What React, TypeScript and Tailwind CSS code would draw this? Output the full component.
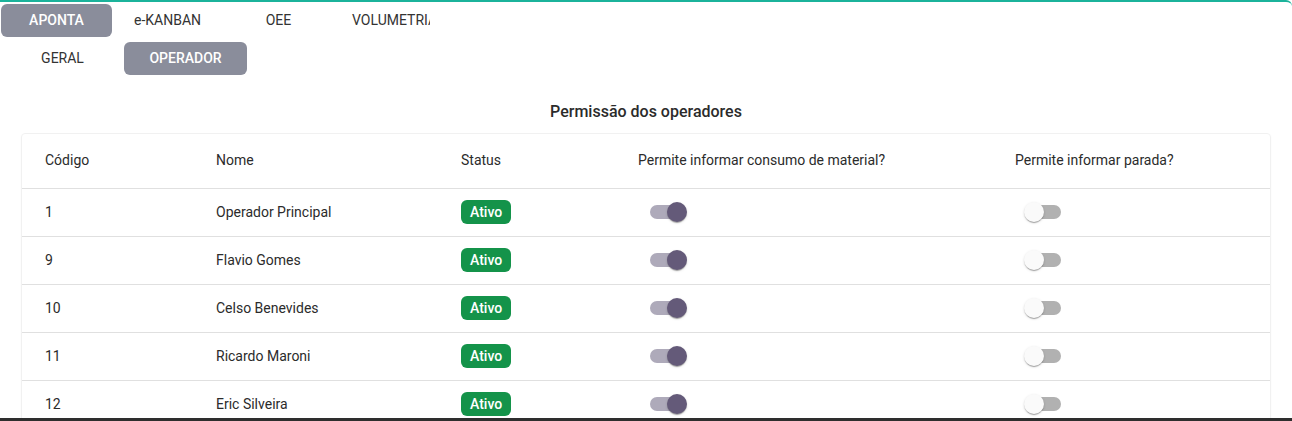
const mainTabs = ["APONTA", "e-KANBAN", "OEE", "VOLUMETRIA"];
const subTabs = ["GERAL", "OPERADOR"];

const operadores = [
  { codigo: 1, nome: "Operador Principal", consumo: true, parada: false },
  { codigo: 9, nome: "Flavio Gomes", consumo: true, parada: false },
  { codigo: 10, nome: "Celso Benevides", consumo: true, parada: false },
  { codigo: 11, nome: "Ricardo Maroni", consumo: true, parada: false },
  { codigo: 12, nome: "Eric Silveira", consumo: true, parada: false },
  { codigo: 14, nome: "Joao Souza", consumo: true, parada: false },
];

function Switch({ on }: { on: boolean }) {
  return (
    <div className="relative w-[58px] h-[38px] shrink-0">
      <div
        className={
          "absolute left-[12px] top-[12px] w-[34px] h-[14px] rounded-full " +
          (on ? "bg-[#aeaaba]" : "bg-[#b1b1b1]")
        }
      />
      <div
        className={
          "absolute top-[9px] w-[20px] h-[20px] rounded-full shadow-[0_2px_1px_-1px_rgba(0,0,0,0.2),0_1px_1px_0_rgba(0,0,0,0.14),0_1px_3px_0_rgba(0,0,0,0.12)] " +
          (on ? "left-[29px] bg-[#645a79]" : "left-[9px] bg-[#fafafa]")
        }
      />
    </div>
  );
}

export default function App() {
  return (
    <div className="w-[1292px] h-[421px] flex flex-col overflow-hidden bg-white font-['Roboto',sans-serif] text-[#2b2b2b]">
      <div className="flex-1 overflow-hidden border-t-2 border-[#1bb39b] rounded-tr-md">
        <div className="pt-[2px] pl-[1px] w-[430px] overflow-hidden flex">
          {mainTabs.map((t, i) => (
            <div
              key={t}
              className={
                "h-[33px] min-w-[111px] px-[18px] shrink-0 flex items-center justify-center rounded-md text-[14px] whitespace-nowrap " +
                (i === 0 ? "bg-[#8a8d9b] text-white font-medium" : "text-[#333]")
              }
            >
              {t}
            </div>
          ))}
        </div>
        <div className="mt-[5px] pl-[1px] flex">
          {subTabs.map((t, i) => (
            <div
              key={t}
              className={
                "h-[33px] w-[123px] flex items-center justify-center rounded-md text-[14px] " +
                (i === 1 ? "bg-[#8a8d9b] text-white font-medium" : "text-[#333]")
              }
            >
              {t}
            </div>
          ))}
        </div>
        <h2 className="mt-[25px] h-6 leading-6 text-center text-[16px] font-medium text-[#2b2b2b]">
          Permissão dos operadores
        </h2>
        <div className="mx-[21px] mt-[9px] border border-[#f1f1f1] rounded-sm shadow-[0_1px_2px_rgba(0,0,0,0.04)]">
          <table className="w-full table-fixed border-collapse text-[14px]">
            <colgroup>
              <col className="w-[170px]" />
              <col className="w-[245px]" />
              <col className="w-[177px]" />
              <col className="w-[377px]" />
              <col />
            </colgroup>
            <thead>
              <tr className="h-[54px] border-b border-[#e0e0e0]">
                <th className="pl-[23px] text-left font-normal">Código</th>
                <th className="pl-[24px] text-left font-normal">Nome</th>
                <th className="pl-[24px] text-left font-normal">Status</th>
                <th className="pl-[24px] text-left font-normal">Permite informar consumo de material?</th>
                <th className="pl-[24px] text-left font-normal">Permite informar parada?</th>
              </tr>
            </thead>
            <tbody>
              {operadores.map((o) => (
                <tr key={o.codigo} className="h-[48px] border-b border-[#e0e0e0]">
                  <td className="pl-[23px]">{o.codigo}</td>
                  <td className="pl-[24px]">{o.nome}</td>
                  <td className="pl-[24px]">
                    <span className="inline-flex items-center h-6 px-[9px] rounded-md bg-[#14934a] text-white font-medium">
                      Ativo
                    </span>
                  </td>
                  <td className="pl-[24px]">
                    <Switch on={o.consumo} />
                  </td>
                  <td className="pl-[24px]">
                    <Switch on={o.parada} />
                  </td>
                </tr>
              ))}
            </tbody>
          </table>
        </div>
      </div>
      <div className="h-[3px] bg-[#2e2e2e]" />
    </div>
  );
}
